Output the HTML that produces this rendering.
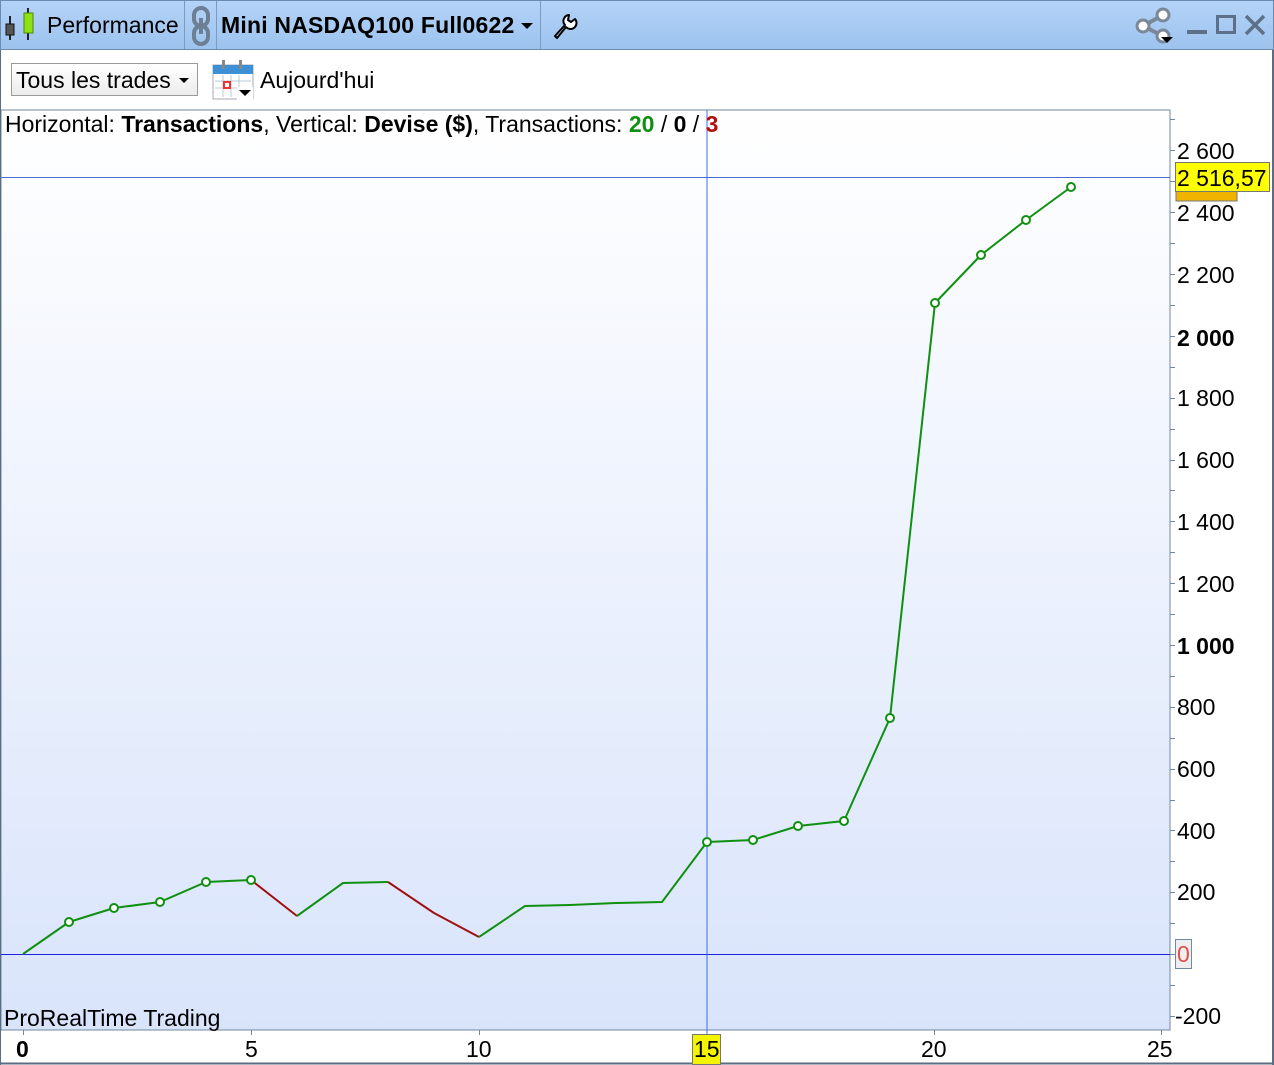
<!DOCTYPE html>
<html><head><meta charset="utf-8"><style>
*{margin:0;padding:0;box-sizing:border-box}
body{width:1274px;height:1065px;overflow:hidden;background:#fff;font-family:"Liberation Sans",Arial,sans-serif;position:relative}
.hdr{position:absolute;left:0;top:0;width:1274px;height:50px;background:linear-gradient(#b4d3f8,#9cc3ee);border:1px solid #6d8bb0;}
.t{position:absolute;white-space:nowrap;color:#000}
.sep{position:absolute;top:1px;width:1px;height:48px;background:#7d9bc0}
</style></head><body>
<div class="hdr"></div>
<svg style="position:absolute;left:4px;top:8px" width="34" height="34" viewBox="0 0 34 34">
<line x1="6" y1="8" x2="6" y2="32" stroke="#222" stroke-width="2"/><rect x="2" y="16" width="8" height="11" fill="#555" stroke="#111"/>
<line x1="24" y1="0" x2="24" y2="32" stroke="#222" stroke-width="2"/><rect x="20" y="5" width="9" height="20" fill="#8fe014" stroke="#4a8a00"/>
</svg>
<div class="t" style="left:47px;top:12px;font-size:23px">Performance</div>
<div class="sep" style="left:184px"></div>
<svg style="position:absolute;left:190px;top:6px" width="22" height="40" viewBox="0 0 22 40">
<rect x="4" y="2" width="14" height="18" rx="7" fill="none" stroke="#6c7f94" stroke-width="4"/><rect x="4" y="20" width="14" height="18" rx="7" fill="none" stroke="#6c7f94" stroke-width="4"/><line x1="11" y1="12" x2="11" y2="28" stroke="#6c7f94" stroke-width="4"/></svg>
<div class="sep" style="left:216px"></div>
<div class="t" style="left:221px;top:12px;font-size:23px;font-weight:bold;letter-spacing:0.2px">Mini NASDAQ100 Full0622</div>
<div style="position:absolute;left:521px;top:23px;border:6px solid transparent;border-top:6px solid #000;border-bottom:0"></div>
<div class="sep" style="left:540px"></div>
<svg style="position:absolute;left:551px;top:11px" width="28" height="28" viewBox="0 0 28 28"><path d="M4 25 L14 14 A6 6 0 0 1 18 4 L17 9 L20 11 L24 8 A6 6 0 0 1 15 16 L6 27 Z" fill="#fff" stroke="#000" stroke-width="2" stroke-linejoin="round"/></svg>
<svg style="position:absolute;left:1133px;top:6px" width="44" height="40" viewBox="0 0 44 40">
<line x1="10" y1="20" x2="30" y2="9" stroke="#7a8898" stroke-width="4"/><line x1="10" y1="20" x2="30" y2="30" stroke="#7a8898" stroke-width="4"/>
<circle cx="10" cy="20" r="6" fill="#fff" stroke="#7a8898" stroke-width="3"/><circle cx="30" cy="9" r="6" fill="#fff" stroke="#7a8898" stroke-width="3"/><circle cx="30" cy="30" r="6" fill="#fff" stroke="#7a8898" stroke-width="3"/>
<path d="M28 31 L40 31 L34 37 Z" fill="#000"/></svg>
<div style="position:absolute;left:1187px;top:30px;width:20px;height:4px;background:#5e7088"></div>
<div style="position:absolute;left:1216px;top:15px;width:20px;height:19px;border:3px solid #5e7088"></div>
<svg style="position:absolute;left:1244px;top:14px" width="22" height="22"><path d="M2 2 L20 20 M20 2 L2 20" stroke="#5e7088" stroke-width="3.5"/></svg>
<div style="position:absolute;left:11px;top:63px;width:187px;height:33px;border:1px solid #9a9a9a;background:linear-gradient(#fff,#ececec)"></div>
<div class="t" style="left:16px;top:67px;font-size:23px">Tous les trades</div>
<div style="position:absolute;left:179px;top:78px;border:5px solid transparent;border-top:5px solid #000;border-bottom:0"></div>
<svg style="position:absolute;left:211px;top:59px" width="44" height="42" viewBox="0 0 44 42">
<rect x="2" y="6" width="40" height="34" fill="#fff" stroke="#aab" /><rect x="2" y="6" width="40" height="9" fill="#3d8fd6"/>
<rect x="11" y="1" width="3" height="9" fill="#888"/><rect x="28" y="1" width="3" height="9" fill="#888"/>
<g stroke="#b8c8d8" stroke-width="1"><line x1="4" y1="22" x2="40" y2="22"/><line x1="4" y1="29" x2="40" y2="29"/><line x1="12" y1="16" x2="12" y2="38"/><line x1="20" y1="16" x2="20" y2="38"/><line x1="28" y1="16" x2="28" y2="38"/></g>
<rect x="13" y="23" width="6" height="6" fill="none" stroke="#e33" stroke-width="2"/>
<rect x="26" y="28" width="16" height="13" fill="#fff"/><path d="M28 31 L40 31 L34 37 Z" fill="#000"/></svg>
<div class="t" style="left:260px;top:67px;font-size:23px">Aujourd'hui</div>

<svg style="position:absolute;left:0;top:0" width="1274" height="1065">
<defs><linearGradient id="g" x1="0" y1="0" x2="0" y2="1"><stop offset="0" stop-color="#ffffff"/><stop offset="1" stop-color="#d9e4fb"/></linearGradient></defs>
<rect x="1" y="110" width="1169" height="920" fill="url(#g)" stroke="#6f8aa0" stroke-width="1"/>
<line x1="0" y1="1063.5" x2="1274" y2="1063.5" stroke="#5b6e80" stroke-width="2"/>
<line x1="1273" y1="50" x2="1273" y2="1065" stroke="#5b6e80" stroke-width="2"/>
<line x1="0.5" y1="50" x2="0.5" y2="1065" stroke="#5b6e80"/>
<line x1="1" y1="177.5" x2="1170" y2="177.5" stroke="#4a6ad0" stroke-width="1"/>
<line x1="1" y1="954.5" x2="1170" y2="954.5" stroke="#2020e0" stroke-width="1"/>
<line x1="707" y1="110" x2="707" y2="1038" stroke="#3a6ef0" stroke-width="1"/>
<g stroke="#6f8aa0">
<line x1="1170" y1="119.5" x2="1175" y2="119.5"/><line x1="1170" y1="150.5" x2="1175" y2="150.5"/><line x1="1170" y1="181.5" x2="1175" y2="181.5"/><line x1="1170" y1="212.5" x2="1175" y2="212.5"/><line x1="1170" y1="243.5" x2="1175" y2="243.5"/><line x1="1170" y1="274.5" x2="1175" y2="274.5"/><line x1="1170" y1="305.5" x2="1175" y2="305.5"/><line x1="1170" y1="336.5" x2="1175" y2="336.5"/><line x1="1170" y1="367.5" x2="1175" y2="367.5"/><line x1="1170" y1="398.5" x2="1175" y2="398.5"/><line x1="1170" y1="429.5" x2="1175" y2="429.5"/><line x1="1170" y1="460.5" x2="1175" y2="460.5"/><line x1="1170" y1="490.5" x2="1175" y2="490.5"/><line x1="1170" y1="521.5" x2="1175" y2="521.5"/><line x1="1170" y1="552.5" x2="1175" y2="552.5"/><line x1="1170" y1="583.5" x2="1175" y2="583.5"/><line x1="1170" y1="614.5" x2="1175" y2="614.5"/><line x1="1170" y1="645.5" x2="1175" y2="645.5"/><line x1="1170" y1="676.5" x2="1175" y2="676.5"/><line x1="1170" y1="707.5" x2="1175" y2="707.5"/><line x1="1170" y1="738.5" x2="1175" y2="738.5"/><line x1="1170" y1="769.5" x2="1175" y2="769.5"/><line x1="1170" y1="800.5" x2="1175" y2="800.5"/><line x1="1170" y1="830.5" x2="1175" y2="830.5"/><line x1="1170" y1="861.5" x2="1175" y2="861.5"/><line x1="1170" y1="892.5" x2="1175" y2="892.5"/><line x1="1170" y1="923.5" x2="1175" y2="923.5"/><line x1="1170" y1="954.5" x2="1175" y2="954.5"/><line x1="1170" y1="985.5" x2="1175" y2="985.5"/><line x1="1170" y1="1016.5" x2="1175" y2="1016.5"/>
<line x1="23.5" y1="1030" x2="23.5" y2="1035"/><line x1="251.5" y1="1030" x2="251.5" y2="1035"/><line x1="479.5" y1="1030" x2="479.5" y2="1035"/><line x1="934.5" y1="1030" x2="934.5" y2="1035"/><line x1="1161.5" y1="1030" x2="1161.5" y2="1035"/>
</g>
<g fill="none" stroke-width="2" stroke-linejoin="round">
<polyline stroke="#109010" points="23,954 69,922 114,908 160,902 206,882 251,880"/>
<polyline stroke="#a01010" points="251,880 297,916"/>
<polyline stroke="#109010" points="297,916 343,883 388,882"/>
<polyline stroke="#a01010" points="388,882 434,913 479,937"/>
<polyline stroke="#109010" points="479,937 525,906 570,905 616,903 662,902 707,842 753,840 798,826 844,821 890,718 935,303 981,255 1026,220 1071,187"/>
</g>
<g fill="#fff" stroke="#109010" stroke-width="2">
<circle cx="69" cy="922" r="4"/><circle cx="114" cy="908" r="4"/><circle cx="160" cy="902" r="4"/><circle cx="206" cy="882" r="4"/><circle cx="251" cy="880" r="4"/>
<circle cx="707" cy="842" r="4"/><circle cx="753" cy="840" r="4"/><circle cx="798" cy="826" r="4"/><circle cx="844" cy="821" r="4"/><circle cx="890" cy="718" r="4"/><circle cx="935" cy="303" r="4"/><circle cx="981" cy="255" r="4"/><circle cx="1026" cy="220" r="4"/><circle cx="1071" cy="187" r="4"/>
</g>
<g font-family="Liberation Sans, Arial, sans-serif" font-size="23" fill="#000">
<text x="1177" y="159">2 600</text>
<rect x="1176" y="184" width="61" height="17" fill="#f0b400" stroke="#777"/>
<text x="1177" y="221">2 400</text><text x="1177" y="283">2 200</text>
<text x="1177" y="346" font-weight="bold">2 000</text>
<text x="1177" y="406">1 800</text><text x="1177" y="468">1 600</text><text x="1177" y="530">1 400</text><text x="1177" y="592">1 200</text>
<text x="1177" y="654" font-weight="bold">1 000</text>
<text x="1177" y="715">800</text><text x="1177" y="777">600</text><text x="1177" y="839">400</text><text x="1177" y="900">200</text>
<rect x="1175.5" y="939.5" width="16" height="29" fill="#eee" stroke="#6f8aa0"/><text x="1177" y="962" fill="#e05050">0</text>
<text x="1175" y="1024">-200</text>
<rect x="1175.5" y="162.5" width="94" height="29" fill="#ffff00" stroke="#777"/><text x="1177" y="186">2 516,57</text>
<text x="16" y="1057" font-weight="bold">0</text>
<text x="245" y="1057">5</text><text x="466" y="1057">10</text>
<rect x="692.5" y="1034.5" width="28" height="30" fill="#f4f400" stroke="#777"/><text x="694" y="1057">15</text>
<text x="921" y="1057">20</text><text x="1147" y="1057">25</text>
<text x="4" y="1026">ProRealTime Trading</text>
<text x="5" y="132">Horizontal: <tspan font-weight="bold">Transactions</tspan>, Vertical: <tspan font-weight="bold">Devise ($)</tspan>, Transactions: <tspan font-weight="bold" fill="#109010">20</tspan> / <tspan font-weight="bold">0</tspan> / <tspan font-weight="bold" fill="#b01010">3</tspan></text>
</g>
</svg>
</body></html>
